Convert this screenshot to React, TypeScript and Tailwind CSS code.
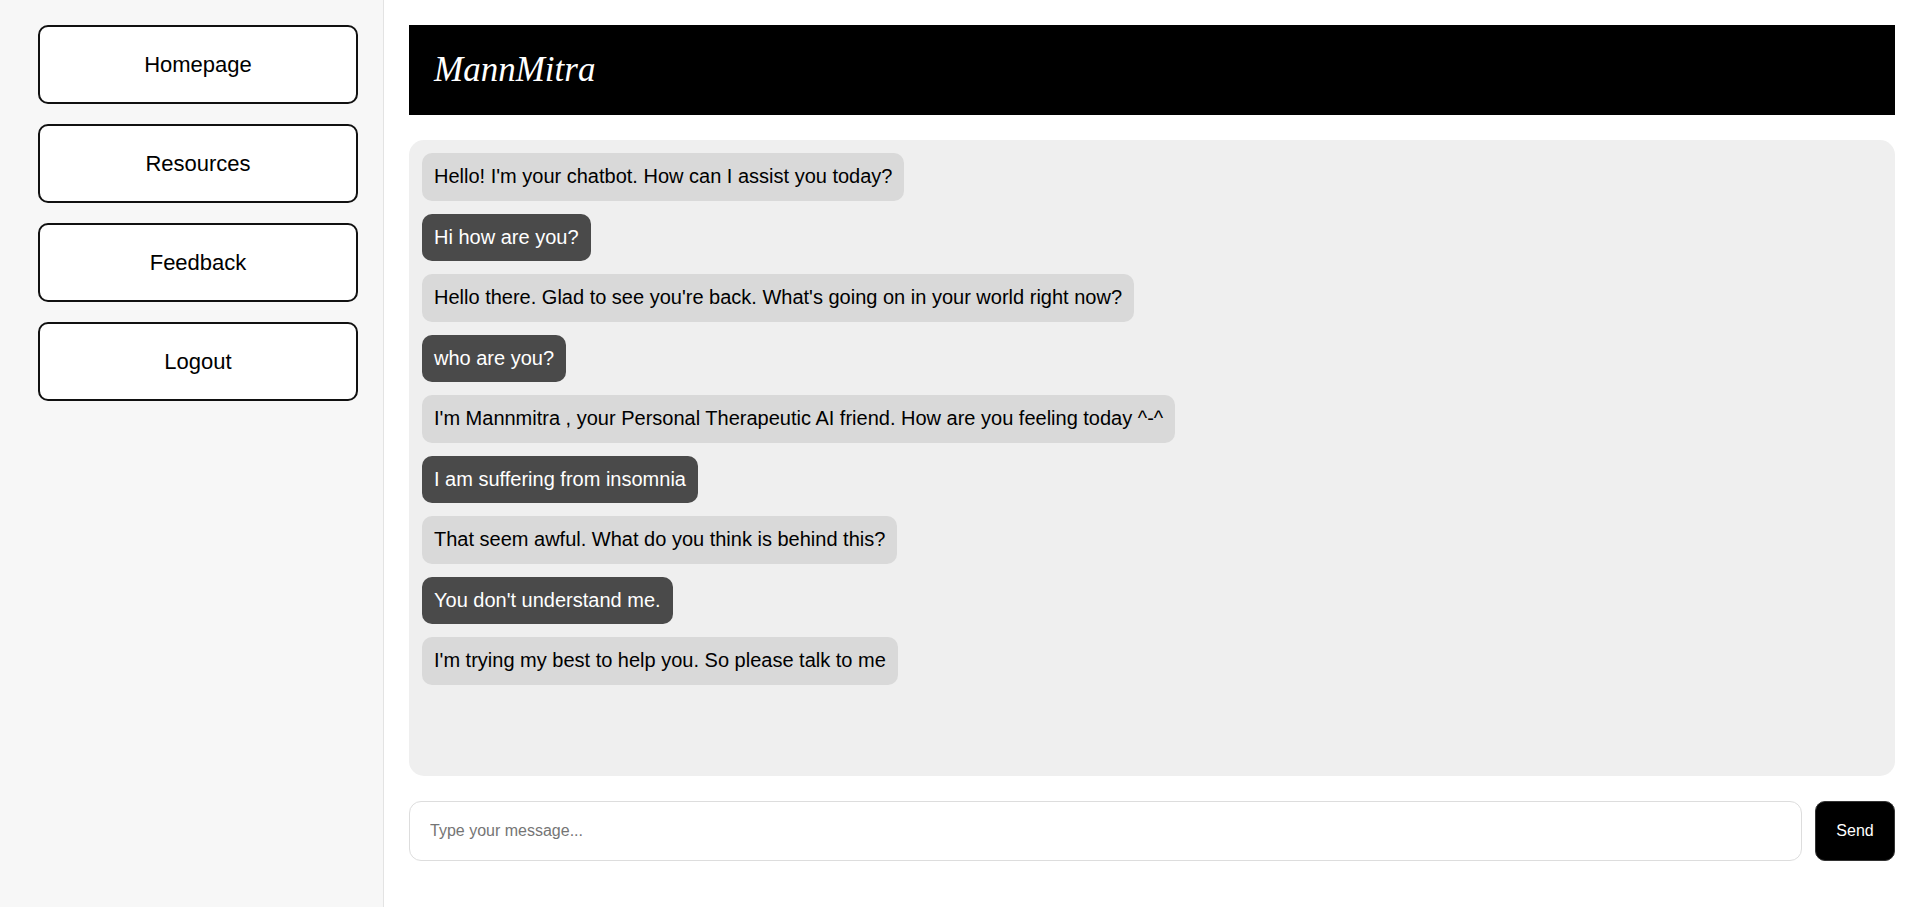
import React from "react";

const messages: { from: "bot" | "user"; text: string }[] = [
  { from: "bot", text: "Hello! I'm your chatbot. How can I assist you today?" },
  { from: "user", text: "Hi how are you?" },
  { from: "bot", text: "Hello there. Glad to see you're back. What's going on in your world right now?" },
  { from: "user", text: "who are you?" },
  { from: "bot", text: "I'm Mannmitra , your Personal Therapeutic AI friend. How are you feeling today ^-^" },
  { from: "user", text: "I am suffering from insomnia" },
  { from: "bot", text: "That seem awful. What do you think is behind this?" },
  { from: "user", text: "You don't understand me." },
  { from: "bot", text: "I'm trying my best to help you. So please talk to me" },
];

const navItems = ["Homepage", "Resources", "Feedback", "Logout"];

export default function App() {
  return (
    <div
      className="flex h-[907px] w-full bg-white"
      style={{ fontFamily: '"Liberation Sans", Arial, sans-serif' }}
    >
      <aside className="flex w-[384px] shrink-0 flex-col gap-[20px] border-r border-[#e3e3e3] bg-[#f7f7f7] pl-[38px] pt-[25px]">
        {navItems.map((n) => (
          <button
            key={n}
            className="flex h-[79px] w-[320px] items-center justify-center rounded-[10px] border-2 border-[#111] bg-white text-[22px] text-black"
          >
            {n}
          </button>
        ))}
      </aside>
      <main className="flex flex-1 flex-col pl-[25px] pr-[24px] pt-[25px]">
        <header className="flex h-[90px] items-center bg-black pl-[25px]">
          <h1
            className="text-[35px] italic text-white"
            style={{ fontFamily: '"Liberation Serif", "Times New Roman", serif' }}
          >
            MannMitra
          </h1>
        </header>
        <section className="mt-[25px] flex h-[636px] flex-col items-start gap-[13px] rounded-[15px] bg-[#efefef] p-[13px]">
          {messages.map((m, i) => (
            <div
              key={i}
              className={
                m.from === "bot"
                  ? "rounded-[10px] bg-[#d9d9d9] px-[12px] py-[12px] text-[20px] leading-[23.5px] text-black"
                  : "rounded-[10px] bg-[#4a4a4a] px-[12px] py-[12px] text-[20px] leading-[23.5px] text-white"
              }
            >
              {m.text}
            </div>
          ))}
        </section>
        <div className="mt-[25px] flex gap-[13px]">
          <input
            className="h-[60px] flex-1 rounded-[12px] border border-[#dddddd] px-[20px] text-[16px] text-black outline-none placeholder:text-[#757575]"
            placeholder="Type your message..."
          />
          <button className="h-[60px] w-[80px] rounded-[10px] border border-[#333] bg-black text-[16px] text-white">
            Send
          </button>
        </div>
      </main>
    </div>
  );
}
